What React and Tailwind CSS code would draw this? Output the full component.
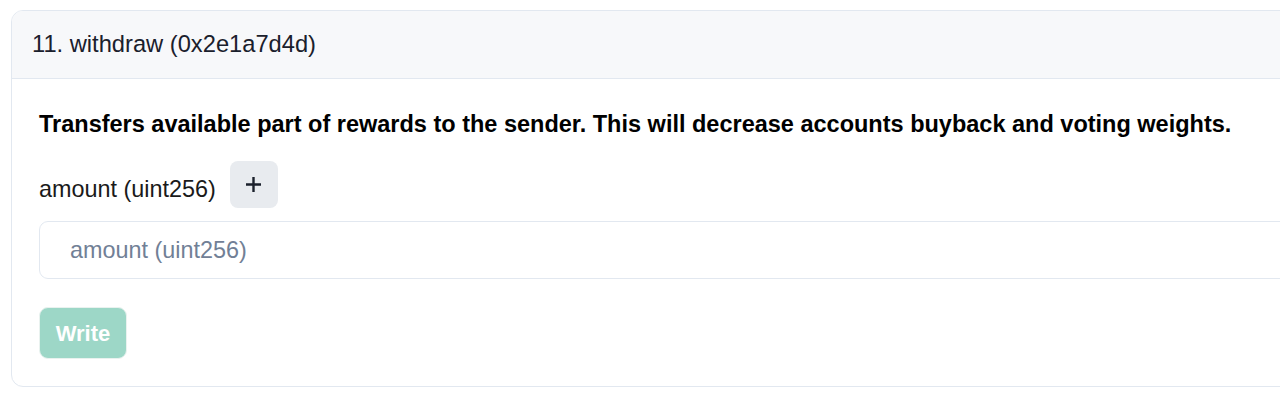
import React from 'react';

const PlusIcon = () => (
    <svg width="17" height="17" viewBox="0 0 17 17" fill="none">
        <path d="M8.5 1v15M1 8.5h15" stroke="#1a202c" strokeWidth="2.4" />
    </svg>
);

const App = () => (
    <div className="min-h-screen w-full overflow-hidden bg-white pt-[10px] pl-[11px] font-['Liberation_Sans',Arial,sans-serif]">
        <div className="w-[1320px] rounded-[12px] border border-[#e2e8f0] overflow-hidden">
            <div className="h-[68px] flex items-center pl-[20px] bg-[#f7f8fa] border-b border-[#e2e8f0] text-[23.7px] text-[#1a202c]">
                11. withdraw (0x2e1a7d4d)
            </div>
            <div className="pl-[27px] pt-[28px] pb-[27px]">
                <p className="text-[23.5px] leading-[34px] font-bold text-black">
                    Transfers available part of rewards to the sender. This will decrease accounts buyback and voting weights.
                </p>
                <div className="mt-[20px] flex items-start gap-[14px]">
                    <span className="mt-[11px] text-[23.4px] leading-[34px] text-[#1a1a1a]">amount (uint256)</span>
                    <button className="w-[48px] h-[47px] flex items-center justify-center rounded-[8px] bg-[#e8ebef]">
                        <PlusIcon />
                    </button>
                </div>
                <input
                    className="mt-[13px] block w-[1300px] h-[58px] rounded-[9px] border border-[#e2e8f0] pl-[30px] text-[23.4px] text-[#1a202c] placeholder:text-[#718096] outline-none"
                    placeholder="amount (uint256)"
                />
                <button
                    disabled
                    className="mt-[28px] block w-[88px] h-[52px] rounded-[9px] border border-[#e9f2ef] bg-[#9dd7c7] text-[22px] font-bold text-white"
                >
                    Write
                </button>
            </div>
        </div>
    </div>
);

export default App;
